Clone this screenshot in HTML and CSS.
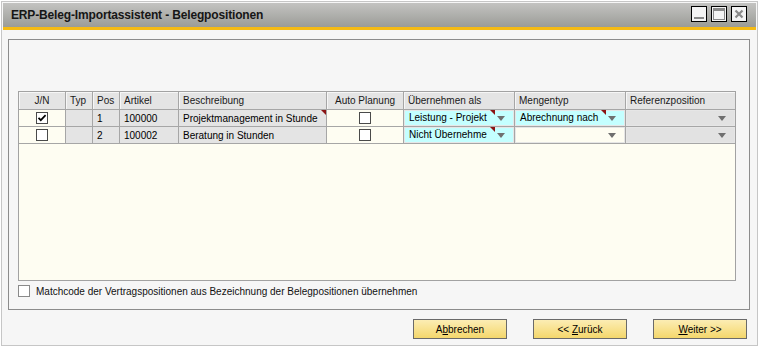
FILE: index.html
```
<!DOCTYPE html>
<html lang="de">
<head>
<meta charset="utf-8">
<title>ERP-Beleg-Importassistent - Belegpositionen</title>
<link rel="stylesheet" href="styles.css">
</head>
<body>
<div class="window">
  <div class="titlebar">
    <span class="title">ERP-Beleg-Importassistent - Belegpositionen</span>
    <div class="tbtns">
      <span class="tb tb-min"><span class="min-bar"></span></span>
      <span class="tb tb-max"><span class="max-box"></span></span>
      <span class="tb tb-close">
        <svg width="10" height="10" viewBox="0 0 10 10"><path d="M1.5 1.5 L8.5 8.5 M8.5 1.5 L1.5 8.5" stroke="#8a8a8a" stroke-width="2.2" fill="none"/></svg>
      </span>
    </div>
  </div>
  <div class="accent"></div>
  <div class="content">
    <div class="panel">
      <div class="grid">
        <table class="tbl">
          <thead>
            <tr>
              <th class="c1 center">J/N</th>
              <th class="c2">Typ</th>
              <th class="c3">Pos</th>
              <th class="c4">Artikel</th>
              <th class="c5">Beschreibung</th>
              <th class="c6 center">Auto Planung</th>
              <th class="c7">Übernehmen als</th>
              <th class="c8">Mengentyp</th>
              <th class="c9 last">Referenzposition</th>
            </tr>
          </thead>
          <tbody>
            <tr>
              <td class="cream center"><span class="cbx"><svg width="10" height="10" viewBox="0 0 10 10"><path d="M1.5 4.8 L3.8 7.2 L8.6 2.2" stroke="#000" stroke-width="1.7" fill="none"/></svg></span></td>
              <td class="gray"></td>
              <td class="gray">1</td>
              <td class="gray">100000</td>
              <td class="gray mark"><span class="clip">Projektmanagement in Stunde</span></td>
              <td class="cream center"><span class="cbx"></span></td>
              <td class="cmb"><div class="combo cyan"><span class="ctext mark">Leistung - Projekt</span><span class="arrow"></span></div></td>
              <td class="cmb"><div class="combo cyan"><span class="ctext mark">Abrechnung nach</span><span class="arrow"></span></div></td>
              <td class="cmb last"><div class="combo grayc"><span class="ctext"></span><span class="arrow"></span></div></td>
            </tr>
            <tr>
              <td class="cream center"><span class="cbx"></span></td>
              <td class="gray"></td>
              <td class="gray">2</td>
              <td class="gray">100002</td>
              <td class="gray"><span class="clip">Beratung in Stunden</span></td>
              <td class="cream center"><span class="cbx"></span></td>
              <td class="cmb"><div class="combo cyan"><span class="ctext mark">Nicht Übernehme</span><span class="arrow"></span></div></td>
              <td class="cmb"><div class="combo creamc"><span class="ctext"></span><span class="arrow"></span></div></td>
              <td class="cmb last"><div class="combo grayc"><span class="ctext"></span><span class="arrow"></span></div></td>
            </tr>
          </tbody>
        </table>
      </div>
      <div class="match"><span class="cbx cbx-flat"></span><span class="match-label">Matchcode der Vertragspositionen aus Bezeichnung der Belegpositionen übernehmen</span></div>
    </div>
    <div class="buttons">
      <button class="btn" type="button">A<u>b</u>brechen</button>
      <button class="btn" type="button">&lt;&lt; <u>Z</u>urück</button>
      <button class="btn" type="button"><u>W</u>eiter &gt;&gt;</button>
    </div>
  </div>
</div>
</body>
</html>
```
FILE: styles.css
```
* { box-sizing: border-box; }
html, body { margin: 0; padding: 0; background: #ffffff; }
body {
  font-family: "Liberation Sans", Arial, sans-serif;
  font-size: 10px;
  color: #000;
}
.window {
  margin: 1px 0 0 1px;
  width: 757px;
  height: 345px;
  border: 1px solid #c6c6c6;
  padding: 1px;
  background: #f6f6f6;
  display: flex;
  flex-direction: column;
}
.titlebar {
  height: 24px;
  flex: none;
  background: linear-gradient(#c3c3c1, #9b9c97);
  display: flex;
  align-items: center;
  justify-content: space-between;
  padding: 0 9px 0 8px;
}
.title {
  font-weight: bold;
  font-size: 12px;
  color: #161616;
  letter-spacing: -0.15px;
}
.tbtns { display: flex; gap: 4px; align-self: flex-start; padding-top: 3px; }
.tb {
  width: 16px; height: 16px;
  border: 1px solid #000;
  background: #f4f4f4;
  display: flex;
  align-items: center;
  justify-content: center;
  position: relative;
}
.min-bar { position: absolute; left: 2px; bottom: 2px; width: 10px; height: 2px; background: #8a8a8a; }
.max-box { width: 12px; height: 12px; border: 1px solid #8a8a8a; border-top-width: 3px; }
.accent { height: 3px; flex: none; background: #f5bb14; }
.content { flex: 1; display: flex; flex-direction: column; }
.panel {
  margin: 9px 0 0 5px;
  width: 742px;
  height: 271px;
  border: 1px solid #8c8c8c;
  padding: 51px 0 0 9px;
}
.grid {
  width: 718px;
  height: 190px;
  border: 1px solid #a2a2a2;
  background: #fefdf2;
}
.tbl {
  border-collapse: separate;
  border-spacing: 0;
  table-layout: fixed;
  width: 716px;
}
.tbl th, .tbl td {
  border-right: 1px solid #a6a6a6;
  border-bottom: 1px solid #a6a6a6;
  padding: 0 4px;
  white-space: nowrap;
  overflow: hidden;
  text-align: left;
  font-weight: normal;
  vertical-align: middle;
}
.tbl th {
  height: 18px;
  background: #e4e4e4;
  color: #1a1a1a;
  box-shadow: inset 1px 1px 0 #f6f6f6;
}
.tbl td { height: 17px; }
.tbl .last { border-right: none; }
.tbl .center { text-align: center; }
.c1 { width: 47px; } .c2 { width: 27px; } .c3 { width: 27px; } .c4 { width: 59px; }
.c5 { width: 148px; } .c6 { width: 77px; } .c7 { width: 111px; } .c8 { width: 111px; } .c9 { width: 109px; }
.cream { background: #fefdf2; }
.gray { background: #e4e4e4; }
.mark { position: relative; }
.mark::after {
  content: "";
  position: absolute;
  top: 0; right: 0;
  border-top: 5px solid #8b1414;
  border-left: 5px solid transparent;
}
.clip { display: block; overflow: hidden; padding-right: 4px; }
.cbx {
  display: inline-flex;
  width: 12px; height: 12px;
  border: 1px solid #4a4a4a;
  background: #fff;
  vertical-align: middle;
  align-items: center;
  justify-content: center;
}
.tbl td.cmb { padding: 0; }
.combo {
  height: 16px;
  display: flex;
  align-items: center;
  box-shadow: inset 0 0 0 1px #e6e6e6;
}
.cyan { background: #c4ffff; }
.grayc { background: #e2e2e2; }
.creamc { background: #fefdf2; }
.ctext {
  flex: 1;
  min-width: 0;
  height: 100%;
  line-height: 16px;
  padding-left: 5px;
  padding-right: 1px;
  overflow: hidden;
  white-space: nowrap;
}
.arrow {
  flex: none;
  width: 19px;
  height: 100%;
  position: relative;
}
.arrow::before {
  content: "";
  position: absolute;
  left: 2px; top: 6px;
  border-top: 5px solid #6f6f6f;
  border-left: 4.5px solid transparent;
  border-right: 4.5px solid transparent;
}
.match {
  display: flex;
  align-items: center;
  gap: 6px;
  margin-top: 4px;
  height: 12px;
}
.cbx-flat { border-color: #8a8a8a; }
.match-label { color: #111; }
.buttons {
  display: flex;
  justify-content: flex-end;
  gap: 26px;
  padding: 9px 9px 0 0;
}
.btn {
  width: 94px;
  height: 20px;
  border: 1px solid #6a6a6a;
  background: linear-gradient(#fcedb4, #f4d76c);
  font-family: "Liberation Sans", Arial, sans-serif;
  font-size: 10px;
  color: #000;
  padding: 0;
  margin: 0;
}
.btn u { text-decoration: underline; }
```
